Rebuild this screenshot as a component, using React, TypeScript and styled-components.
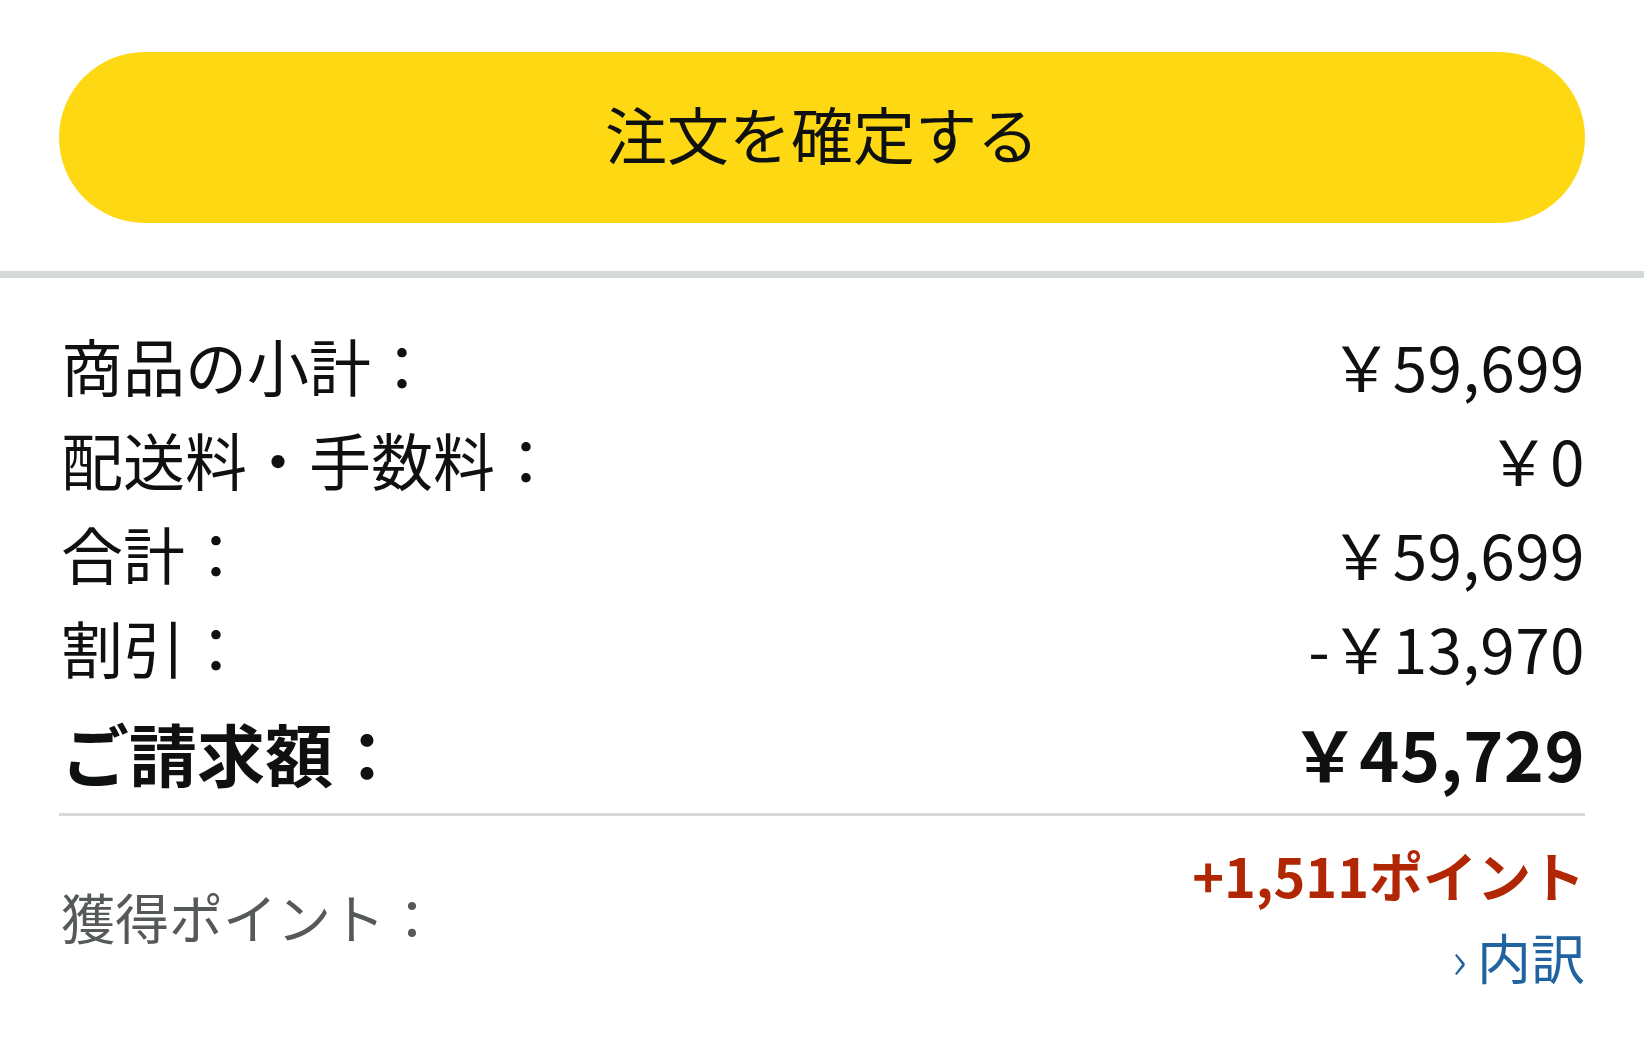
import React from 'react';
import styled, { createGlobalStyle } from 'styled-components';

const GlobalStyle = createGlobalStyle`
  html, body {
    margin: 0;
    padding: 0;
    background: #ffffff;
  }
  body {
    font-family: "Noto Sans CJK JP", "Noto Sans", sans-serif;
    color: #0f1111;
  }
`;

const Page = styled.div`
  width: 1644px;
  min-height: 1043px;
  background: #fff;
`;

const ButtonArea = styled.div`
  padding: 52px 59px 48px;
`;

const ConfirmButton = styled.button`
  display: flex;
  align-items: center;
  justify-content: center;
  width: 100%;
  height: 171px;
  padding: 0 0 10px;
  border: none;
  border-radius: 86px;
  background: #ffd814;
  color: #0f1111;
  font-family: inherit;
  font-size: 62px;
  cursor: pointer;
`;

const ThickRule = styled.hr`
  margin: 0;
  border: none;
  height: 7px;
  background: #d5d9d9;
`;

const Summary = styled.div`
  padding: 40px 59px 0 61px;
`;

const Row = styled.div<{ $total?: boolean }>`
  display: flex;
  justify-content: space-between;
  align-items: center;
  height: ${(p) => (p.$total ? 116 : 94)}px;
  font-size: ${(p) => (p.$total ? 68 : 62)}px;
  font-weight: ${(p) => (p.$total ? 700 : 400)};
`;

const Amount = styled.span`
  letter-spacing: 0.5px;
`;

const ThinRule = styled.hr`
  margin: 3px 59px 0;
  border: none;
  height: 3px;
  background: #d5d9d9;
`;

const Points = styled.div`
  display: flex;
  justify-content: space-between;
  align-items: center;
  padding: 18px 59px 0 61px;
`;

const PointsLabel = styled.span`
  font-size: 54px;
  color: #565959;
`;

const PointsColumn = styled.div`
  display: flex;
  flex-direction: column;
  align-items: flex-end;
`;

const PointsValue = styled.span`
  font-size: 54px;
  line-height: 82px;
  font-weight: 700;
  color: #b12704;
`;

const Breakdown = styled.a`
  font-size: 54px;
  line-height: 82px;
  color: #2162a1;
  text-decoration: none;
  display: flex;
  align-items: center;
  gap: 10px;
`;

const Chevron = styled.span`
  font-size: 52px;
  font-weight: 300;
`;

const rows = [
  { label: '商品の小計：', value: '￥59,699' },
  { label: '配送料・手数料：', value: '￥0' },
  { label: '合計：', value: '￥59,699' },
  { label: '割引：', value: '-￥13,970' },
];

const App = () => (
  <Page>
    <GlobalStyle />
    <ButtonArea>
      <ConfirmButton>注文を確定する</ConfirmButton>
    </ButtonArea>
    <ThickRule />
    <Summary>
      {rows.map((r) => (
        <Row key={r.label}>
          <span>{r.label}</span>
          <Amount>{r.value}</Amount>
        </Row>
      ))}
      <Row $total>
        <span>ご請求額：</span>
        <Amount>￥45,729</Amount>
      </Row>
    </Summary>
    <ThinRule />
    <Points>
      <PointsLabel>獲得ポイント：</PointsLabel>
      <PointsColumn>
        <PointsValue>+1,511ポイント</PointsValue>
        <Breakdown href="#">
          <Chevron>›</Chevron>
          内訳
        </Breakdown>
      </PointsColumn>
    </Points>
  </Page>
);

export default App;
